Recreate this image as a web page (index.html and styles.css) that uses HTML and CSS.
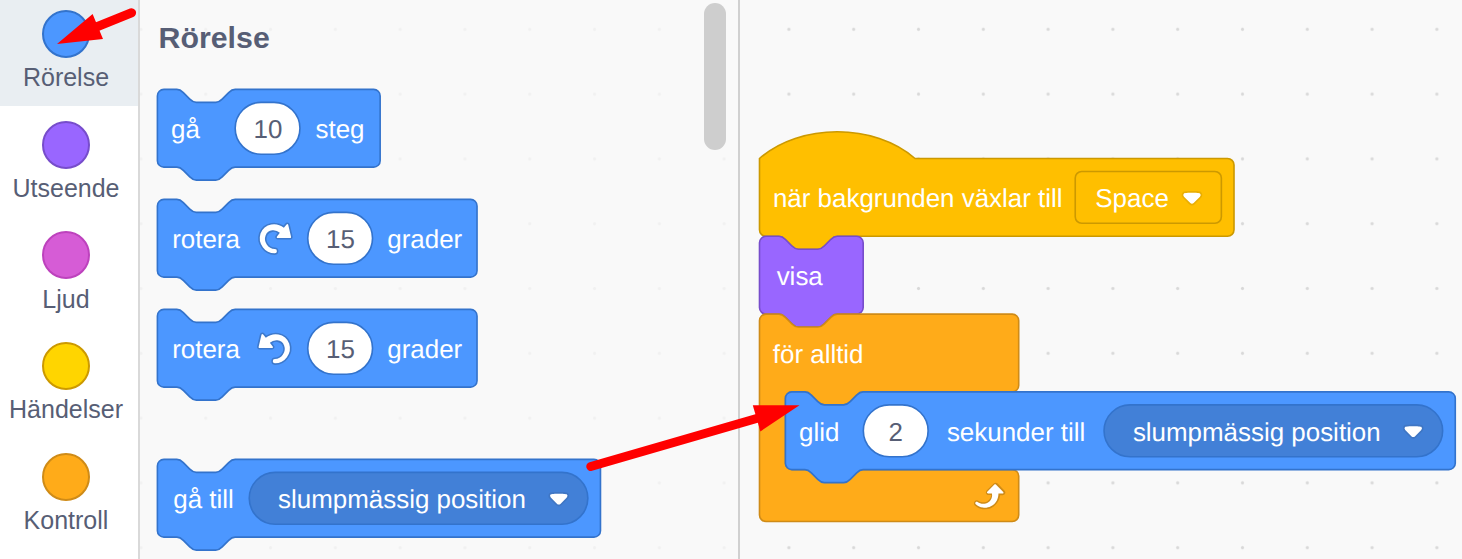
FILE: index.html
```html
<!DOCTYPE html>
<html lang="sv">
<head>
<meta charset="utf-8">
<title>Scratch</title>
<link rel="stylesheet" href="styles.css">
</head>
<body>
<svg class="defs" width="0" height="0" aria-hidden="true">
  <defs>
    <g id="caret">
      <path class="caret-shade" d="M12.71 2.44A2.41 2.41 0 0 1 12 4.16L8.08 8.08a2.45 2.45 0 0 1-3.45 0L.72 4.16A2.42 2.42 0 0 1 0 2.44 2.48 2.48 0 0 1 .71.71C1 .47 1.43 0 6.36 0S11.75.46 12 .71A2.44 2.44 0 0 1 12.71 2.44Z"/>
      <path fill="#fff" d="M6.36 7.79a1.43 1.43 0 0 1-1-.42L1.42 3.45a1.44 1.44 0 0 1 0-2c.56-.56 9.31-.56 9.87 0a1.44 1.44 0 0 1 0 2L7.37 7.37A1.43 1.43 0 0 1 6.36 7.79Z"/>
    </g>
    <g id="rotate">
      <path fill="#3d79cc" d="M22.68,12.2a1.6,1.6,0,0,1-1.27.63H13.72a1.59,1.59,0,0,1-1.16-2.58l1.12-1.41a4.82,4.82,0,0,0-3.14-.77,4.31,4.31,0,0,0-2,.8,4.25,4.25,0,0,0-1.34,1.73,5.06,5.06,0,0,0,.54,4.62A5.58,5.58,0,0,0,12,17.74h0a2.26,2.26,0,0,1-.16,4.52A10.25,10.25,0,0,1,3.74,18,10.14,10.14,0,0,1,2.25,8.78,9.7,9.7,0,0,1,5.08,4.64,9.92,9.92,0,0,1,9.66,2.5a10.66,10.66,0,0,1,7.72,1.68l1.08-1.35a1.57,1.57,0,0,1,1.24-.6,1.6,1.6,0,0,1,1.54,1.21l1.7,7.37A1.57,1.57,0,0,1,22.68,12.2Z"/>
      <path fill="#fff" d="M21.38,11.83H13.77a.59.59,0,0,1-.43-1l1.75-2.19a5.9,5.9,0,0,0-4.7-1.58,5.07,5.07,0,0,0-4.11,3.17A6,6,0,0,0,7,15.77a6.51,6.51,0,0,0,5,2.92,1.31,1.31,0,0,1-.08,2.62,9.3,9.3,0,0,1-7.35-3.82A9.16,9.16,0,0,1,3.17,9.12,8.51,8.51,0,0,1,5.71,5.4,8.76,8.76,0,0,1,9.82,3.48a9.71,9.71,0,0,1,7.75,2.07l1.67-2.1a.59.59,0,0,1,1,.21L22,11.08A.59.59,0,0,1,21.38,11.83Z"/>
    </g>
  </defs>
</svg>
<div class="editor">
  <nav class="categories">
    <div class="category selected"><span class="bubble motion"></span><span class="label">Rörelse</span></div>
    <div class="category"><span class="bubble looks"></span><span class="label">Utseende</span></div>
    <div class="category"><span class="bubble sound"></span><span class="label">Ljud</span></div>
    <div class="category"><span class="bubble events"></span><span class="label">Händelser</span></div>
    <div class="category"><span class="bubble control"></span><span class="label">Kontroll</span></div>
  </nav>

  <section class="palette">
    <div class="block-list">
      <h1 class="heading">Rörelse</h1>
      <svg class="block" width="226" height="93"><g transform="translate(.4 .4) scale(1.62)">
        <path class="shape blue" d="M0,4A4,4 0 0,1 4,0H12c2,0 3,1 4,2l4,4c1,1 2,2 4,2h12c2,0 3,-1 4,-2l4,-4c1,-1 2,-2 4,-2H133.5a4,4 0 0,1 4,4v40a4,4 0 0,1 -4,4H48c-2,0 -3,1 -4,2l-4,4c-1,1 -2,2 -4,2h-12c-2,0 -3,-1 -4,-2l-4,-4c-1,-1 -2,-2 -4,-2H4a4,4 0 0,1 -4,-4z"/>
        <text x="8.4" y="30">gå</text>
        <rect class="input" x="48" y="8" width="40" height="32" rx="16"/>
        <text class="value" x="68.2" y="30">10</text>
        <text x="97.6" y="30">steg</text>
      </g></svg>
      <svg class="block" width="322" height="93"><g transform="translate(.4 .4) scale(1.62)">
        <path class="shape blue" d="M0,4A4,4 0 0,1 4,0H12c2,0 3,1 4,2l4,4c1,1 2,2 4,2h12c2,0 3,-1 4,-2l4,-4c1,-1 2,-2 4,-2H193.3a4,4 0 0,1 4,4v40a4,4 0 0,1 -4,4H48c-2,0 -3,1 -4,2l-4,4c-1,1 -2,2 -4,2h-12c-2,0 -3,-1 -4,-2l-4,-4c-1,-1 -2,-2 -4,-2H4a4,4 0 0,1 -4,-4z"/>
        <text x="9.1" y="30">rotera</text>
        <use href="#rotate" x="60.5" y="12"/>
        <rect class="input" x="92.8" y="8" width="40" height="32" rx="16"/>
        <text class="value" x="113" y="30">15</text>
        <text x="141.9" y="30">grader</text>
      </g></svg>
      <svg class="block" width="322" height="93"><g transform="translate(.4 .4) scale(1.62)">
        <path class="shape blue" d="M0,4A4,4 0 0,1 4,0H12c2,0 3,1 4,2l4,4c1,1 2,2 4,2h12c2,0 3,-1 4,-2l4,-4c1,-1 2,-2 4,-2H193.3a4,4 0 0,1 4,4v40a4,4 0 0,1 -4,4H48c-2,0 -3,1 -4,2l-4,4c-1,1 -2,2 -4,2h-12c-2,0 -3,-1 -4,-2l-4,-4c-1,-1 -2,-2 -4,-2H4a4,4 0 0,1 -4,-4z"/>
        <text x="9.1" y="30">rotera</text>
        <use href="#rotate" transform="translate(84.5 12) scale(-1 1)"/>
        <rect class="input" x="92.8" y="8" width="40" height="32" rx="16"/>
        <text class="value" x="113" y="30">15</text>
        <text x="141.9" y="30">grader</text>
      </g></svg>
      <svg class="block spaced" width="446" height="93"><g transform="translate(.4 .4) scale(1.62)">
        <path class="shape blue" d="M0,4A4,4 0 0,1 4,0H12c2,0 3,1 4,2l4,4c1,1 2,2 4,2h12c2,0 3,-1 4,-2l4,-4c1,-1 2,-2 4,-2H269.5a4,4 0 0,1 4,4v40a4,4 0 0,1 -4,4H48c-2,0 -3,1 -4,2l-4,4c-1,1 -2,2 -4,2h-12c-2,0 -3,-1 -4,-2l-4,-4c-1,-1 -2,-2 -4,-2H4a4,4 0 0,1 -4,-4z"/>
        <text x="9.8" y="30">gå till</text>
        <rect class="menu" x="56.7" y="8" width="209" height="32" rx="16"/>
        <text x="74.5" y="30">slumpmässig position</text>
        <use href="#caret" x="241.4" y="20.1"/>
      </g></svg>
    </div>
    <div class="scrollbar"></div>
  </section>

  <main class="workspace">
    <svg class="script" width="722" height="559">
      <g transform="translate(19.5 158.5) scale(1.62)">
        <path class="shape yellow" d="M0,0c25,-22 71,-22 96,0H288.9a4,4 0 0,1 4,4v40a4,4 0 0,1 -4,4H48c-2,0 -3,1 -4,2l-4,4c-1,1 -2,2 -4,2h-12c-2,0 -3,-1 -4,-2l-4,-4c-1,-1 -2,-2 -4,-2H4a4,4 0 0,1 -4,-4z"/>
        <text x="8.3" y="30">när bakgrunden växlar till</text>
        <rect class="shape yellow" x="194.9" y="8" width="90.2" height="32" rx="4"/>
        <text x="207.3" y="30">Space</text>
        <use href="#caret" x="260.6" y="20.1"/>
      </g>
      <g transform="translate(19.5 236.3) scale(1.62)">
        <path class="shape purple" d="M0,4A4,4 0 0,1 4,0H12c2,0 3,1 4,2l4,4c1,1 2,2 4,2h12c2,0 3,-1 4,-2l4,-4c1,-1 2,-2 4,-2H60a4,4 0 0,1 4,4v40a4,4 0 0,1 -4,4H48c-2,0 -3,1 -4,2l-4,4c-1,1 -2,2 -4,2h-12c-2,0 -3,-1 -4,-2l-4,-4c-1,-1 -2,-2 -4,-2H4a4,4 0 0,1 -4,-4z"/>
        <text x="10.6" y="30">visa</text>
      </g>
      <g transform="translate(19.5 314.1) scale(1.62)">
        <path class="shape orange" d="M0,4A4,4 0 0,1 4,0H12c2,0 3,1 4,2l4,4c1,1 2,2 4,2h12c2,0 3,-1 4,-2l4,-4c1,-1 2,-2 4,-2H156a4,4 0 0,1 4,4v40a4,4 0 0,1 -4,4H64c-2,0 -3,1 -4,2l-4,4c-1,1 -2,2 -4,2h-12c-2,0 -3,-1 -4,-2l-4,-4c-1,-1 -2,-2 -4,-2H20a4,4 0 0,0 -4,4v40a4,4 0 0,0 4,4H156a4,4 0 0,1 4,4v24a4,4 0 0,1 -4,4H4a4,4 0 0,1 -4,-4z"/>
        <text x="8.2" y="30">för alltid</text>
        <g transform="translate(128.3 99.8)">
          <path fill="#cf8b17" d="M23.3,11c-.3.6-.9,1-1.5,1h-1.6c-.1,1.3-.5,2.5-1.1,3.6-.9,1.7-2.3,3.2-4.1,4.1-1.7.9-3.6,1.2-5.5.9-1.8-.3-3.5-1.1-4.9-2.3-.7-.7-.7-1.9,0-2.6.6-.6,1.6-.7,2.3-.2H7c.9.6,1.9.9,2.9.9s1.9-.3,2.7-.9c.7-.5,1.3-1.2,1.7-2,.3-.5.4-1,.5-1.6H13.1c-.9,0-1.7-.7-1.7-1.6,0-.4.2-.9.5-1.2l4.4-4.4c.7-.6,1.7-.6,2.4,0L23,9.2C23.5,9.7,23.6,10.4,23.3,11Z"/>
          <path fill="#fff" d="M21.8,11h-2.6c0,1.5-.3,2.9-1,4.2-.8,1.6-2.1,2.8-3.7,3.6-1.5.8-3.3,1.1-4.9.8-1.6-.2-3.2-1-4.4-2.1-.4-.3-.4-.9-.1-1.2.3-.4.9-.4,1.2-.1h0c1,.7,2.2,1.1,3.4,1.1s2.3-.3,3.3-1c.9-.6,1.6-1.5,2-2.6.3-.9.4-1.8.2-2.8h-2.4c-.4,0-.7-.3-.7-.7,0-.2.1-.3.2-.4l4.4-4.4c.3-.3.7-.3.9,0L22,9.8c.3.3.4.6.3.9S22,11,21.8,11Z"/>
        </g>
      </g>
      <g transform="translate(45.4 391.9) scale(1.62)">
        <path class="shape blue" d="M0,4A4,4 0 0,1 4,0H12c2,0 3,1 4,2l4,4c1,1 2,2 4,2h12c2,0 3,-1 4,-2l4,-4c1,-1 2,-2 4,-2H409.5a4,4 0 0,1 4,4v40a4,4 0 0,1 -4,4H48c-2,0 -3,1 -4,2l-4,4c-1,1 -2,2 -4,2h-12c-2,0 -3,-1 -4,-2l-4,-4c-1,-1 -2,-2 -4,-2H4a4,4 0 0,1 -4,-4z"/>
        <text x="8.4" y="30">glid</text>
        <rect class="input" x="48.1" y="8" width="40" height="32" rx="16"/>
        <text class="value" x="68.1" y="30">2</text>
        <text x="99.7" y="30">sekunder till</text>
        <rect class="menu" x="196.7" y="8" width="209" height="32" rx="16"/>
        <text x="214.5" y="30">slumpmässig position</text>
        <use href="#caret" x="381.2" y="20.1"/>
      </g>
    </svg>
  </main>
</div>

<svg class="pointers" width="1462" height="559" aria-hidden="true">
  <path class="shaft" d="M131.6,12.8 L97,26.7"/>
  <path class="head" d="M57,44 L92.6,14 L103,39z"/>
  <path class="shaft" d="M590.8,466.5 L760,417.5"/>
  <path class="head" d="M799.5,405.3 L752.8,405.3 L760.4,431.4z"/>
</svg>
</body>
</html>
```
FILE: styles.css
```css
* {
  box-sizing: border-box;
}

body {
  margin: 0;
  overflow: hidden;
  background: #f9f9f9;
  color: #575e75;
  font-family: "Liberation Sans", Arial, sans-serif;
}

.defs {
  position: absolute;
}

.editor {
  display: flex;
  width: 1462px;
  height: 559px;
  overflow: hidden;
}

.categories {
  flex: none;
  width: 140px;
  border-right: 2px solid #d9d9d9;
  background: #fff;
}

.category {
  display: flex;
  flex-direction: column;
  align-items: center;
  height: 106px;
  margin-bottom: 4.7px;
  padding: 10px 6px 0 0;
}

.selected {
  background: #e9eef2;
}

.bubble {
  width: 48px;
  height: 48px;
  border: 2px solid;
  border-radius: 50%;
}

.motion { background: #4c97ff; border-color: #3373cc; }
.looks { background: #9966ff; border-color: #774dcb; }
.sound { background: #d65cd6; border-color: #bd42bd; }
.events { background: #ffd500; border-color: #cc9900; }
.control { background: #ffab19; border-color: #cf8b17; }

.label {
  margin-top: 5.2px;
  font-size: 25px;
  line-height: 28px;
  white-space: nowrap;
}

.palette {
  display: flex;
  flex: none;
  justify-content: space-between;
  width: 600px;
  padding: 0 12px 0 17px;
  border-right: 2px solid #d0d0d0;
  /* Grid dots barely show through the palette */
  background: radial-gradient(circle at 32.4px 32.4px, #f1f1f1 1px, #f9f9f900 2.1px) 33.3px -3.1px / 64.8px 64.8px;
}

.block-list {
  display: flex;
  flex-direction: column;
}

.heading {
  flex: none;
  height: 89px;
  margin: 0;
  padding: 20px 0 0 1.6px;
  font-size: 30.3px;
  line-height: 35px;
}

.block {
  flex: none;
  margin-bottom: 17px;
  overflow: visible;
}

.spaced {
  margin-top: 39.5px;
}

.scrollbar {
  width: 22px;
  height: 147px;
  margin-top: 3px;
  border-radius: 11px;
  background: #cecece;
}

.workspace {
  flex: 1;
  background: radial-gradient(circle at 32.4px 32.4px, #d9d9d9 1px, #f9f9f900 2.1px) 16.5px -3.1px / 64.8px 64.8px;
}

.script {
  display: block;
}

/* Block shapes, drawn in block units and scaled up */
.shape { stroke-width: 1; }
.blue { fill: #4c97ff; stroke: #3373cc; }
.purple { fill: #9966ff; stroke: #774dcb; }
.orange { fill: #ffab19; stroke: #cf8b17; }
.yellow { fill: #ffbf00; stroke: #cc9900; }
.input { fill: #fff; stroke: #3373cc; }
.menu { fill: #4280d7; stroke: #3373cc; }
.caret-shade { fill: #231f20; opacity: 0.1; }

text {
  fill: #fff;
  font-size: 16px;
  text-rendering: geometricPrecision;
}

.value {
  fill: #575e75;
  text-anchor: middle;
}

.pointers {
  position: absolute;
  top: 0;
  left: 0;
  pointer-events: none;
}

.shaft {
  stroke: #f00;
  stroke-width: 9;
  stroke-linecap: round;
}

.head {
  fill: #f00;
}
```
